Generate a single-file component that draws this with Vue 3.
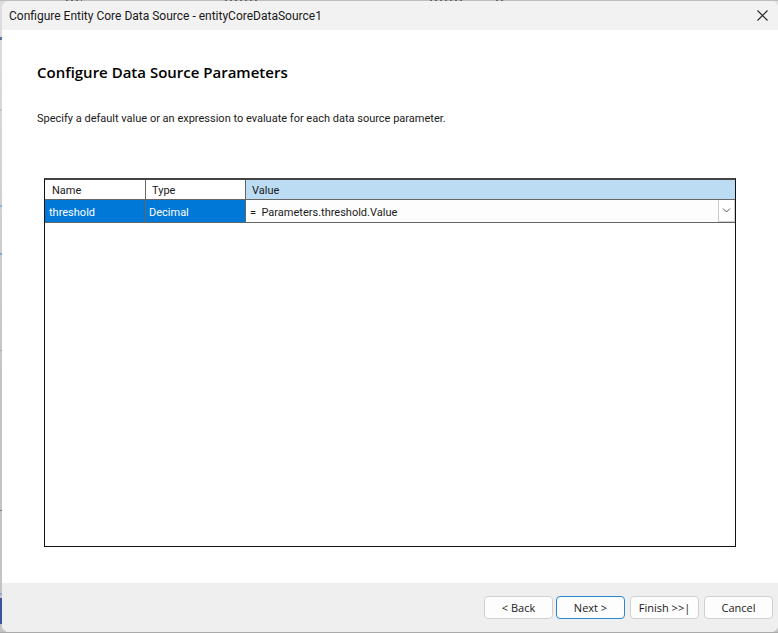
<script setup>
import { ref } from 'vue'

const columns = ['Name', 'Type', 'Value']
const parameters = ref([
  { name: 'threshold', type: 'Decimal', value: '=  Parameters.threshold.Value' }
])
</script>

<template>
  <div class="backdrop">
    <div class="dialog" role="dialog" aria-labelledby="dialog-title">
      <header class="titlebar">
        <span id="dialog-title">Configure Entity Core Data Source - entityCoreDataSource1</span>
        <button class="close" type="button" aria-label="Close">
          <svg width="11" height="11" viewBox="0 0 11 11" fill="none" stroke="#222" stroke-width="1.1">
            <path d="M0.5 0.5L10.5 10.5M10.5 0.5L0.5 10.5" />
          </svg>
        </button>
      </header>

      <main class="page">
        <h1>Configure Data Source Parameters</h1>
        <p>Specify a default value or an expression to evaluate for each data source parameter.</p>
        <div class="grid">
          <table>
            <thead>
              <tr>
                <th v-for="c in columns" :key="c" :class="{ current: c === 'Value' }">{{ c }}</th>
              </tr>
            </thead>
            <tbody>
              <tr v-for="p in parameters" :key="p.name">
                <td>{{ p.name }}</td>
                <td>{{ p.type }}</td>
                <td class="editor">
                  <div class="combo">
                    <input v-model="p.value" type="text" :aria-label="p.name + ' value'" />
                    <button type="button" aria-label="Open value list">
                      <svg width="9" height="5" viewBox="0 0 9 5" fill="none" stroke="#555" stroke-width="1">
                        <path d="M1 0.5L4.5 4L8 0.5" />
                      </svg>
                    </button>
                  </div>
                </td>
              </tr>
            </tbody>
          </table>
        </div>
      </main>

      <footer class="actions">
        <div class="steps">
          <button type="button">&lt; Back</button>
          <button type="button" class="primary">Next &gt;</button>
        </div>
        <button type="button">Finish &gt;&gt;|</button>
        <button type="button">Cancel</button>
      </footer>
    </div>
  </div>
</template>

<style>
body {
  margin: 0;
}
</style>

<style scoped>
* {
  box-sizing: border-box;
}

.backdrop {
  display: flex;
  min-height: 100vh;
  padding: 1px 0 1px 2px;
  font-family: Roboto, "Open Sans", sans-serif;
  font-size: 11px;
  color: #1a1a1a;
  background:
    linear-gradient(#3a559f, #3a559f) 0 598px / 2px 26px no-repeat,
    linear-gradient(#8faad0, #8faad0) 0 593px / 2px 2px no-repeat,
    linear-gradient(#777, #777) 0 510px / 2px 1px no-repeat,
    linear-gradient(#8eb4d2, #8eb4d2) 0 350px / 2px 1px no-repeat,
    linear-gradient(#7fa9d0, #7fa9d0) 0 253px / 2px 2px no-repeat,
    linear-gradient(#8eb4d2, #8eb4d2) 0 205px / 2px 2px no-repeat,
    linear-gradient(#b3c8c6, #b3c8c6) 0 109px / 2px 2px no-repeat,
    linear-gradient(#5d6c9e, #5d6c9e) 0 37px / 2px 3px no-repeat,
    repeating-linear-gradient(90deg, #666 0 2px, #bbb 2px 5px) 66px 0 / 16px 1px no-repeat,
    repeating-linear-gradient(90deg, #666 0 2px, #bbb 2px 5px) 225px 0 / 32px 1px no-repeat,
    repeating-linear-gradient(90deg, #666 0 2px, #bbb 2px 5px) 430px 0 / 34px 1px no-repeat,
    repeating-linear-gradient(90deg, #666 0 2px, #bbb 2px 5px) 496px 0 / 8px 1px no-repeat,
    linear-gradient(#aaa, #aaa) 0 100% / 100% 1px no-repeat,
    linear-gradient(#bdbdbd, #bdbdbd) 0 0 / 100% 1px no-repeat,
    linear-gradient(#dedede, #c4c4c4 380px);
}

.dialog {
  flex: 1;
  display: flex;
  flex-direction: column;
  overflow: hidden;
  border-radius: 7px;
  background: #fff;
}

.titlebar {
  display: flex;
  align-items: center;
  justify-content: space-between;
  height: 29px;
  padding: 0 10px 0 7px;
  font-size: 12px;
  background: #f2f2f2;
}

.close {
  display: flex;
  padding: 0;
  border: 0;
  background: none;
}

.page {
  flex: 1;
  display: flex;
  flex-direction: column;
  padding: 32px 42px 36px 35px;
}

h1 {
  margin: 0;
  font-family: "Open Sans", sans-serif;
  font-size: 15px;
  font-weight: 600;
  line-height: 20px;
  color: #000;
}

p {
  margin: 29px 0 51px;
  line-height: 16px;
}

.grid {
  flex: 1;
  margin-left: 7px;
  border: 1px solid #111;
  border-top: 2px solid #444;
}

table {
  width: 100%;
  border-collapse: separate;
  border-spacing: 0;
  table-layout: fixed;
}

th,
td {
  padding: 2px 4px 0;
  text-align: left;
  font-weight: 400;
  border-right: 1px solid #666;
  border-bottom: 1px solid #666;
}

th {
  width: 101px;
  height: 20px;
  padding-left: 7px;
  line-height: 16px;
}

th:nth-child(2) {
  width: 100px;
  padding-left: 6px;
}

th:nth-child(3) {
  width: auto;
  padding-left: 6px;
  border-right: 0;
}

.current {
  background: #bbdcf3;
}

td {
  height: 23px;
  color: #fff;
  background: #0078d7;
}

td:nth-child(2) {
  padding-left: 3px;
}

.editor {
  border-right: 0;
  background: #fdfdfd;
}

td.editor {
  padding: 0;
}

.combo {
  display: flex;
  height: 22px;
}

.combo input {
  flex: 1;
  min-width: 0;
  padding: 2px 4px 0;
  border: 0;
  outline: 0;
  font: inherit;
  color: #1a1a1a;
  background: none;
}

.combo button {
  display: flex;
  align-items: center;
  justify-content: center;
  width: 17px;
  padding: 0;
  border: 1px solid #ccc;
  border-top: 0;
  background: #fff;
}

.actions {
  display: flex;
  justify-content: flex-end;
  gap: 5px;
  padding: 13px 5px;
  background: #efefef;
}

.steps {
  display: flex;
  gap: 3px;
}

.actions button {
  width: 69px;
  height: 23px;
  padding: 0;
  border: 1px solid #d0d0d0;
  border-radius: 4px;
  font-family: "Open Sans", sans-serif;
  font-size: 11px;
  color: #1a1a1a;
  background: #fdfdfd;
}

.actions .primary {
  border-color: #2a86d1;
}
</style>
